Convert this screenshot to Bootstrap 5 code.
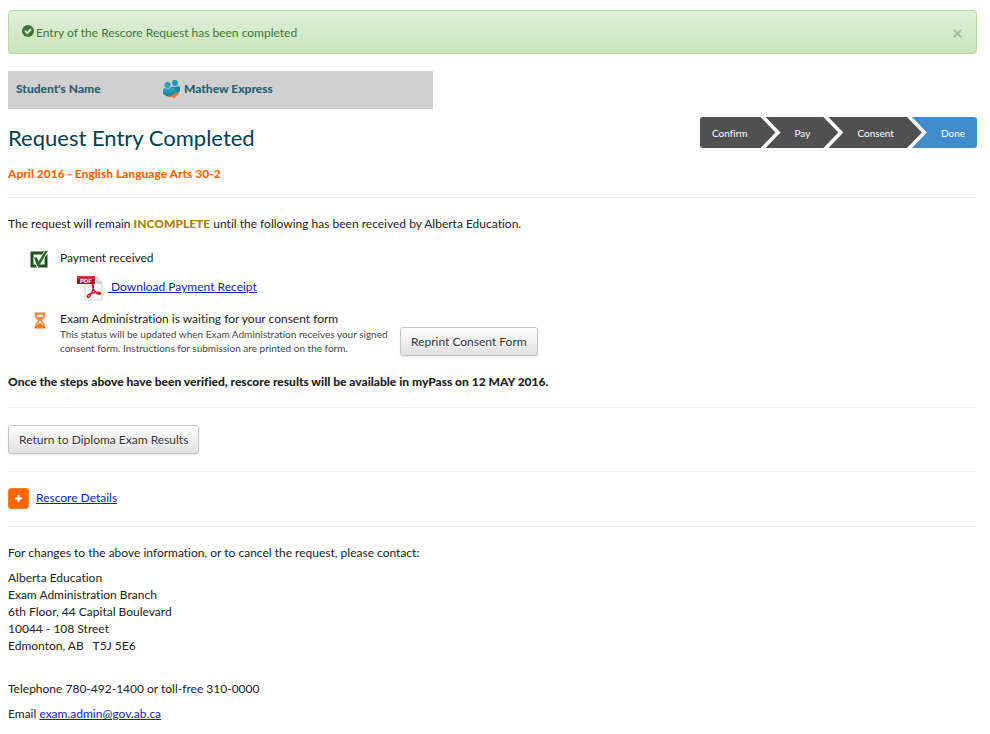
<!DOCTYPE html>
<html lang="en">
<head>
<meta charset="utf-8">
<meta name="viewport" content="width=device-width, initial-scale=1">
<title>Request Entry Completed</title>
<link href="https://cdn.jsdelivr.net/npm/bootstrap@5.3.0/dist/css/bootstrap.min.css" rel="stylesheet">
<style>
body { font-family: Lato, "Open Sans", sans-serif; font-size: 12px; line-height: 17px; color: #222; background: #fff; font-variant-ligatures: none; }
.page { padding: 10px 13px 8px 8px; }
.page a { color: #0b1cc4; }
.page hr { margin: 0; border-color: #eee; opacity: 1; }
.notice { padding: 13px 13px 12px; color: #3c763d; border: 1px solid #b2dba1; border-radius: 4px; background: linear-gradient(#dff0d8, #c8e5bc); margin-bottom: 17px; }
.notice svg { margin: 1px 2px 0 0; }
.notice .dismiss { border: 0; background: none; padding: 0; color: #9db797; font-size: 19px; line-height: 17px; font-weight: 700; }
.student { max-width: 425px; padding: 8px 8px 11px; background: #d0d0d0; color: #286070; font-weight: 900; margin-bottom: 8px; }
.student dt { width: 147px; font-weight: 900; }
h1 { font-size: 22px; line-height: 26px; font-weight: 400; color: #004050; margin: 8px 0 0; }
h2 { font-size: 12px; line-height: 17px; font-weight: 900; color: #f60; margin: 14px 0 15px; }
.steps { font-size: 10px; line-height: 31px; color: #fff; border-radius: 3px; overflow: hidden; }
.steps li { background: #505050; padding: 1px 28px 0 29px; height: 31px; margin-left: -10px; clip-path: polygon(0 0, calc(100% - 15px) 0, 100% 50%, calc(100% - 15px) 100%, 0 100%, 15px 50%); }
.steps li:first-child { margin-left: 0; padding-left: 12px; clip-path: polygon(0 0, calc(100% - 15px) 0, 100% 50%, calc(100% - 15px) 100%, 0 100%); }
.steps li:last-child { background: #428bca; padding-right: 12px; clip-path: polygon(0 0, 100% 0, 100% 100%, 0 100%, 15px 50%); }
.heavy { font-weight: 900; }
.pending { color: #a88400; font-weight: 900; }
.intro { margin: 17px 0; }
.marker { width: 52px; padding: 1px 0 0 22px; }
.receipt { padding: 10px 0 0 16px; }
.receipt a { margin-top: 2px; }
.waiting { margin-top: 8px; }
.hint { font-size: 10px; line-height: 14px; color: #444; }
.consent-text { width: 340px; }
.reprint { padding-top: 17px; }
.outcome { margin: 17px 0; }
.actions { padding: 17px 0; }
.details { gap: 7px; padding: 16px 0 17px; }
.details a { padding-bottom: 2px; }
.contact { margin: 17px 0 8px; }
.phone { margin: 26px 0 8px; }
.btn-plain { font-size: 12px; line-height: 17px; padding: 5px 10px; color: #333; border: 1px solid #c4c4c4; border-radius: 3px; background: linear-gradient(#fff, #e0e0e0); box-shadow: 0 1px 2px rgba(0,0,0,.1); text-shadow: 0 1px 0 #fff; }
.btn-expand { width: 21px; height: 21px; padding: 0; border: 1px solid #ff7d26; border-radius: 3px; background: #f60; }
</style>
<script src="https://cdn.jsdelivr.net/npm/bootstrap@5.3.0/dist/js/bootstrap.bundle.min.js"></script>
</head>
<body>
<main class="page">
  <div class="notice d-flex justify-content-between" role="alert">
    <div class="d-flex align-items-start"><svg width="12" height="12" viewBox="0 0 12 12" aria-hidden="true"><circle cx="6" cy="6" r="6" fill="#3c763d"/><path d="M3 5.8 5.2 8 9 4.2" fill="none" stroke="#dcedd5" stroke-width="2"/></svg><span>Entry of the Rescore Request has been completed</span></div>
    <button type="button" class="dismiss" aria-label="Close">×</button>
  </div>

  <dl class="student d-flex align-items-center">
    <dt>Student's Name</dt>
    <dd class="d-flex align-items-center m-0"><svg class="me-1" width="17" height="19" viewBox="0 0 17 19" aria-hidden="true"><defs><linearGradient id="shirt" x1="0" y1="0" x2="0" y2="1"><stop offset="0" stop-color="#3aa9c0"/><stop offset="1" stop-color="#0c7893"/></linearGradient></defs><path d="M7 9q2-2 5-1l4-1q2 2 1 5-2 3-6 3z" fill="#1787a2"/><circle cx="12" cy="4" r="3" fill="#1c9ab4"/><path d="M0 15q-1-5 2-6 3 1 5 0 4-1 5 1 2 3 0 6-6 4-12-1z" fill="url(#shirt)"/><circle cx="4.500" cy="6" r="3" fill="#2aa2bb"/><path d="M5 17q5 0 7-3l4 0q0 2-3 3l-1 2-3-1q-3 0-4-1z" fill="#f9701a"/></svg>Mathew Express</dd>
  </dl>

  <div class="d-flex justify-content-between align-items-start">
    <div>
      <h1>Request Entry Completed</h1>
      <h2>April 2016 - English Language Arts 30-2</h2>
    </div>
    <ol class="steps list-unstyled d-flex m-0">
      <li>Confirm</li><li>Pay</li><li>Consent</li><li aria-current="step">Done</li>
    </ol>
  </div>
  <hr>

  <p class="intro">The request will remain <strong class="pending">INCOMPLETE</strong> until the following has been received by Alberta Education.</p>

  <div class="d-flex">
    <div class="marker"><svg width="19" height="19" viewBox="0 0 19 19" aria-hidden="true"><path d="M2 3h14v13H2z" fill="#fff" stroke="#1d5220" stroke-width="3"/><path d="M5 8.500 7.500 14 17 1" fill="none" stroke="#fff" stroke-width="4"/><path d="M4 7.500h3l1.500 4L15 1l3-.5L9 16H7z" fill="#286a28"/></svg></div>
    <div>Payment received
      <div class="receipt d-flex align-items-start"><svg class="me-1" width="28" height="26" viewBox="0 0 28 26" aria-hidden="true"><path d="M9 1h12l5 5v18H9z" fill="#f7f7f7" stroke="#d4d4d4"/><path d="M20 1v6h6" fill="#ddd" stroke="#bbb"/><path d="M16.500 8c2 2 0 8-2 11-1 2-2 3-3 2s1-3 5-4 7-1 8 0-2 2-4 0-5-5-4-9z" fill="none" stroke="#c3202c" stroke-width="1.500"/><path d="M1 0h18v8H1z" fill="#a5142a"/><path d="M1 0h18v3H1z" fill="#bf3546"/><text x="4" y="6.500" font-family="Lato, sans-serif" font-size="6" font-weight="900" fill="#fff">PDF</text></svg><a class="d-block" href="#receipt">&nbsp;Download Payment Receipt</a></div>
    </div>
  </div>

  <div class="waiting d-flex">
    <div class="marker"><svg class="ms-1" width="12" height="18" viewBox="0 0 12 18" aria-hidden="true"><path d="M.5 1.500h11M.5 15.500h11" stroke="#ff7a1c" stroke-width="2"/><path d="M2 2v2c0 3 3 3 3 4.500s-3 2-3 4.500v2M10 2v2c0 3-3 3-3 4.500s3 2 3 4.500v2" fill="none" stroke="#ff7a1c" stroke-width="1.500"/><path d="M3 5h6L6 8zM2.500 15q0-3 3.500-4 3.500 1 3.500 4z" fill="#ff7a1c"/></svg></div>
    <div class="consent-text">Exam Administration is waiting for your consent form
      <div class="hint">This status will be updated when Exam Administration receives your signed<br>consent form. Instructions for submission are printed on the form.</div>
    </div>
    <div class="reprint"><button type="button" class="btn btn-plain">Reprint Consent Form</button></div>
  </div>

  <p class="outcome heavy">Once the steps above have been verified, rescore results will be available in myPass on 12 MAY 2016.</p>
  <hr>
  <div class="actions"><button type="button" class="btn btn-plain">Return to Diploma Exam Results</button></div>
  <hr>
  <div class="details d-flex align-items-center"><button type="button" class="btn-expand d-flex align-items-center justify-content-center" aria-label="Expand rescore details"><svg width="7" height="7" viewBox="0 0 7 7" aria-hidden="true"><path d="M3.500 0v7M0 3.500h7" stroke="#fff" stroke-width="2"/></svg></button><a href="#details">Rescore Details</a></div>
  <hr>
  <p class="contact">For changes to the above information, or to cancel the request, please contact:</p>
  <address class="m-0">Alberta Education<br>Exam Administration Branch<br>6th Floor, 44 Capital Boulevard<br>10044 - 108 Street<br>Edmonton, AB &nbsp; T5J 5E6</address>
  <p class="phone">Telephone 780-492-1400 or toll-free 310-0000</p>
  <p class="m-0">Email <a href="mailto:exam.admin@gov.ab.ca">exam.admin@gov.ab.ca</a></p>
</main>
</body>
</html>
